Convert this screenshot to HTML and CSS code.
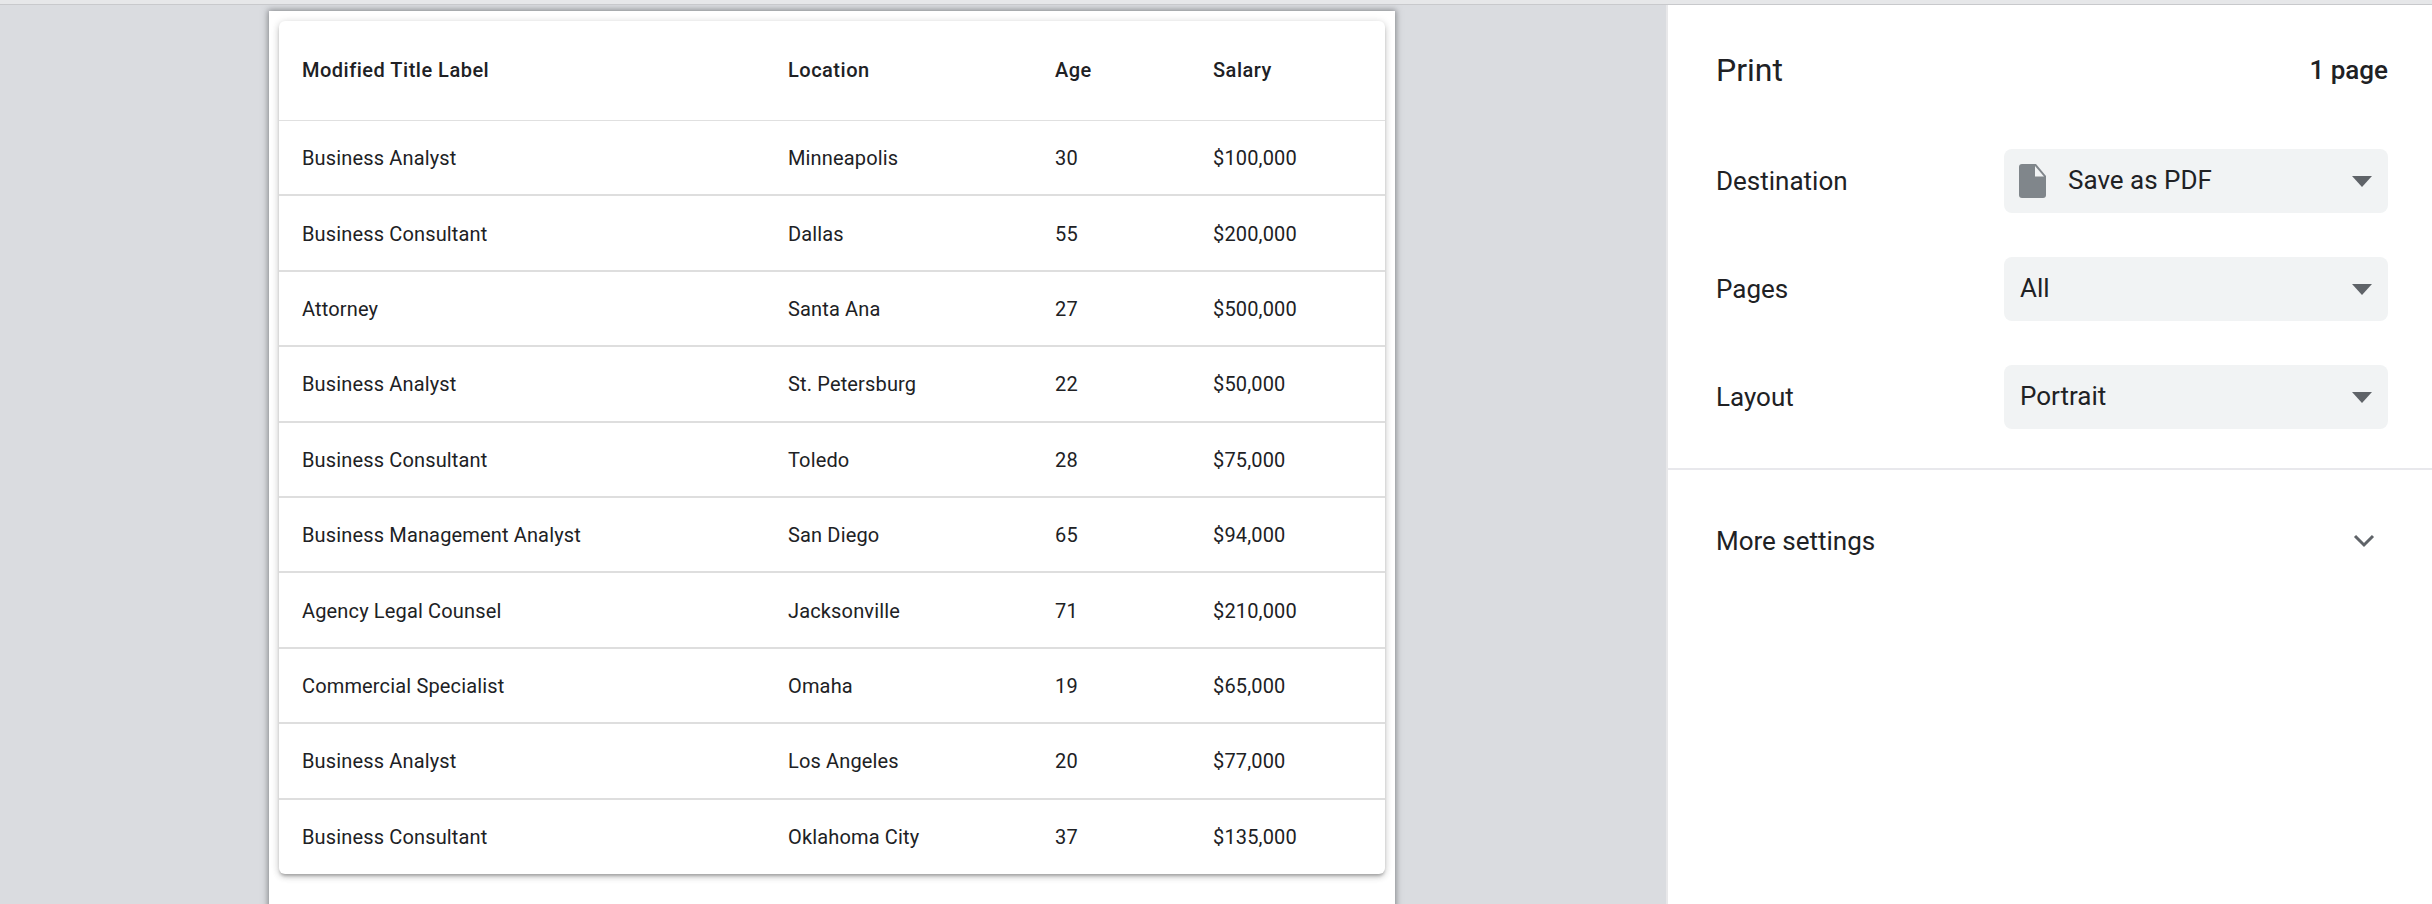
FILE: index.html
```html
<!DOCTYPE html>
<html lang="en">

<head>
  <meta charset="UTF-8">
  <meta name="viewport" content="width=device-width, initial-scale=1.0">
  <title>Print</title>
  <link rel="stylesheet" href="styles.css">
</head>

<body>
  <div class="top-bar"></div>
  <div class="main">
    <div class="preview">
      <div class="sheet">
        <div class="card">
          <table class="data-table">
            <thead>
              <tr>
                <th class="col-title">Modified Title Label</th>
                <th class="col-location">Location</th>
                <th class="col-age">Age</th>
                <th>Salary</th>
              </tr>
            </thead>
            <tbody>
              <tr><td>Business Analyst</td><td>Minneapolis</td><td>30</td><td>$100,000</td></tr>
              <tr><td>Business Consultant</td><td>Dallas</td><td>55</td><td>$200,000</td></tr>
              <tr><td>Attorney</td><td>Santa Ana</td><td>27</td><td>$500,000</td></tr>
              <tr><td>Business Analyst</td><td>St. Petersburg</td><td>22</td><td>$50,000</td></tr>
              <tr><td>Business Consultant</td><td>Toledo</td><td>28</td><td>$75,000</td></tr>
              <tr><td>Business Management Analyst</td><td>San Diego</td><td>65</td><td>$94,000</td></tr>
              <tr><td>Agency Legal Counsel</td><td>Jacksonville</td><td>71</td><td>$210,000</td></tr>
              <tr><td>Commercial Specialist</td><td>Omaha</td><td>19</td><td>$65,000</td></tr>
              <tr><td>Business Analyst</td><td>Los Angeles</td><td>20</td><td>$77,000</td></tr>
              <tr><td>Business Consultant</td><td>Oklahoma City</td><td>37</td><td>$135,000</td></tr>
            </tbody>
          </table>
        </div>
      </div>
    </div>
    <div class="sidebar">
      <div class="side-head">
        <h1>Print</h1>
        <span class="page-count">1 page</span>
      </div>
      <div class="settings">
        <div class="setting-row">
          <span class="setting-label">Destination</span>
          <div class="select">
            <svg class="file-icon" viewBox="0 0 27 34" width="27" height="34">
              <path fill="#80868b" d="M3 0H17L27 12V31a3 3 0 0 1-3 3H3a3 3 0 0 1-3-3V3a3 3 0 0 1 3-3z" />
              <path fill="#f1f3f4" d="M16 2L25 12.500H16z" />
            </svg>
            <span class="select-text">Save as PDF</span>
            <span class="caret"></span>
          </div>
        </div>
        <div class="setting-row">
          <span class="setting-label">Pages</span>
          <div class="select">
            <span class="select-text">All</span>
            <span class="caret"></span>
          </div>
        </div>
        <div class="setting-row">
          <span class="setting-label">Layout</span>
          <div class="select">
            <span class="select-text">Portrait</span>
            <span class="caret"></span>
          </div>
        </div>
      </div>
      <div class="more-settings">
        <span>More settings</span>
        <svg viewBox="0 0 22 14" width="22" height="14">
          <path fill="none" stroke="#5f6368" stroke-width="3" d="M2 2l9 9 9-9" />
        </svg>
      </div>
    </div>
  </div>
</body>

</html>
```

FILE: styles.css
```css
html,
body {
  height: 100%;
}

body {
  margin: 0;
  overflow: hidden;
  display: flex;
  flex-direction: column;
  background-color: #dadce0;
  color: #202124;
  font-family: Roboto, "Liberation Sans", sans-serif;
}

.top-bar {
  height: 4px;
  flex: none;
  background-color: #e6e7e9;
  border-bottom: 1px solid #c8c9cc;
}

.main {
  flex: 1;
  display: flex;
  min-height: 0;
}

/* preview side */
.preview {
  flex: 1;
  padding: 6px 0 0 269px;
  overflow: hidden;
}

.sheet {
  box-sizing: border-box;
  width: 1126px;
  height: 1000px;
  padding: 10px;
  background-color: #fff;
  box-shadow: 0 0 6px 1px rgba(60, 64, 67, 0.55);
}

.card {
  border-radius: 6px;
  background-color: #fff;
  box-shadow: 0 3px 3px -1px rgba(0, 0, 0, 0.22), 0 3px 7px 0 rgba(0, 0, 0, 0.14), 0 1px 8px 0 rgba(0, 0, 0, 0.12);
}

.data-table {
  width: 100%;
  border-collapse: collapse;
  table-layout: fixed;
  font-size: 20px;
  letter-spacing: 0.15px;
}

.data-table th,
.data-table td {
  box-sizing: border-box;
  padding: 0 23px;
  text-align: left;
}

.data-table th {
  height: 99px;
  font-weight: 500;
  letter-spacing: 0.5px;
  border-bottom: 1px solid #e0e0e0;
}

.data-table td {
  height: 75.400px;
  padding-top: 1px;
  border-bottom: 2px solid #dedede;
}

.data-table tbody tr:last-child td {
  border-bottom: 0;
}

.col-title {
  width: 486px;
}

.col-location {
  width: 267px;
}

.col-age {
  width: 158px;
}

/* print settings */
.sidebar {
  box-sizing: border-box;
  flex: none;
  width: 766px;
  background-color: #fff;
  border-left: 2px solid #e8e8ea;
}

.side-head {
  display: flex;
  justify-content: space-between;
  align-items: center;
  height: 128px;
  padding: 1px 44px 0 48px;
  box-sizing: border-box;
}

.side-head h1 {
  margin: 0;
  font-size: 32px;
  font-weight: 400;
}

.page-count {
  font-size: 26px;
  font-weight: 500;
}

.settings {
  display: flex;
  flex-direction: column;
  gap: 44px;
  padding: 16px 44px 39px 48px;
  border-bottom: 2px solid #e8e8ec;
}

.setting-row {
  display: flex;
  align-items: center;
  font-size: 26px;
}

.setting-label {
  width: 288px;
}

.select {
  flex: 1;
  display: flex;
  align-items: center;
  height: 64px;
  padding: 0 16px;
  border-radius: 8px;
  background-color: #f1f3f4;
}

.select-text {
  margin-bottom: 2px;
}

.file-icon {
  margin-left: -1px;
  margin-right: 22px;
}

.caret {
  margin-left: auto;
  border-top: 11px solid #5f6368;
  border-left: 10px solid transparent;
  border-right: 10px solid transparent;
}

.more-settings {
  display: flex;
  align-items: center;
  justify-content: space-between;
  height: 142px;
  padding: 0 57px 0 48px;
  font-size: 26px;
}
```
